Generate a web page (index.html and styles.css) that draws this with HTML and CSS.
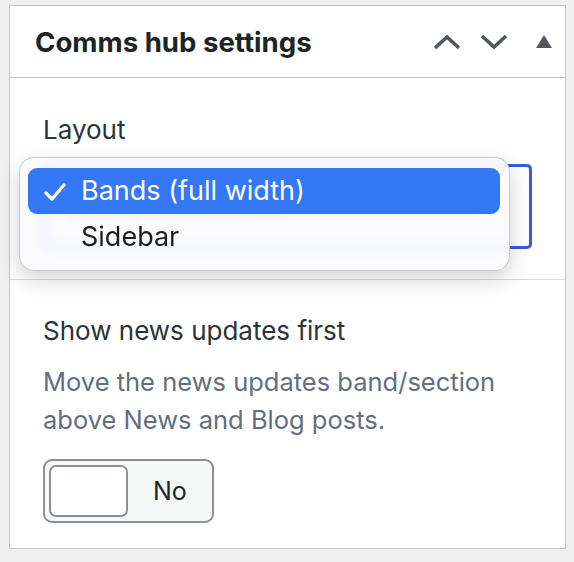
FILE: index.html
```html
<!DOCTYPE html>
<html lang="en">
<head>
  <meta charset="UTF-8">
  <title>Comms hub settings</title>
  <link rel="stylesheet" href="styles.css">
</head>
<body>

  <div class="postbox">
    <!-- Header -->
    <div class="postbox-header">
      <h2>Comms hub settings</h2>
      <div class="handle-actions">
        <button class="handle-btn" aria-label="Move up">
          <svg width="30" height="18" viewBox="0 0 30 18"><path d="M3 15 L15 4 L27 15" fill="none" stroke="#50575e" stroke-width="3.6"/></svg>
        </button>
        <button class="handle-btn" aria-label="Move down">
          <svg width="30" height="18" viewBox="0 0 30 18"><path d="M3 3 L15 14 L27 3" fill="none" stroke="#50575e" stroke-width="3.6"/></svg>
        </button>
        <button class="handle-btn toggle-arrow" aria-label="Toggle panel">
          <svg width="16" height="13" viewBox="0 0 16 13"><path d="M8 0 L16 13 L0 13 Z" fill="#50575e"/></svg>
        </button>
      </div>
    </div>

    <!-- Layout setting -->
    <div class="field">
      <label class="field-label">Layout</label>
      <div class="select-wrap">
        <div class="select">Bands (full width)</div>
        <!-- native dropdown menu (open) -->
        <div class="menu">
          <div class="menu-item selected">
            <svg class="check" width="22" height="18" viewBox="0 0 22 18"><path d="M2 10 L8 16 L20 2" fill="none" stroke="#fff" stroke-width="3.2" stroke-linecap="round" stroke-linejoin="round"/></svg>
            Bands (full width)
          </div>
          <div class="menu-item">Sidebar</div>
        </div>
      </div>
    </div>

    <!-- News first setting -->
    <div class="field last">
      <label class="field-label">Show news updates first</label>
      <p class="help">Move the news updates band/section above News and Blog posts.</p>
      <div class="switch">
        <span class="knob"></span>
        <span class="switch-text">No</span>
      </div>
    </div>
  </div>

</body>
</html>
```

FILE: styles.css
```css
body {
  margin: 0;
  padding: 5px 8px 0 9px;
  background: #f0f0f1;
  font-family: 'Inter', 'Liberation Sans', sans-serif;
  color: #1d2327;
}

.postbox {
  background: #fff;
  border: 1px solid #c3c4c7;
  height: 544px;
  box-sizing: border-box;
}

.postbox-header {
  display: flex;
  align-items: center;
  justify-content: space-between;
  height: 71px;
  padding: 0 13px 0 25px;
  border-bottom: 1px solid #c3c4c7;
}

.postbox-header h2 {
  margin: 0;
  font-size: 27.6px;
  font-weight: 700;
  color: #1d2327;
}

.handle-actions {
  display: flex;
  align-items: center;
  gap: 17px;
}

.handle-btn {
  background: none;
  border: none;
  padding: 0;
  display: flex;
  cursor: pointer;
}

.toggle-arrow {
  margin-left: 10px;
}

.field {
  padding: 36px 33px 30px;
  border-bottom: 1px solid #dcdcde;
}

.field.last {
  border-bottom: none;
  padding-top: 35px;
}

.field-label {
  display: block;
  font-size: 26px;
  line-height: 31px;
  color: #2c3338;
  margin-bottom: 19px;
}

.field.last .field-label {
  margin-bottom: 17px;
}

.select-wrap {
  position: relative;
}

.select {
  height: 79px;
  border: 3px solid #3858e9;
  border-radius: 5px;
  padding: 0 20px;
  font-size: 26px;
  line-height: 79px;
  color: #2c3338;
}

.menu {
  position: absolute;
  top: -7px;
  left: -24px;
  width: 491px;
  height: 114px;
  box-sizing: border-box;
  padding: 10px 9px 0 8px;
  border-radius: 15px;
  border: 1px solid rgba(0, 0, 0, 0.2);
  background: rgba(250, 250, 254, 0.86);
  backdrop-filter: blur(6px);
  box-shadow: 0 8px 22px rgba(0, 0, 0, 0.18);
}

.menu-item {
  height: 46px;
  line-height: 46px;
  padding-left: 53px;
  border-radius: 9px;
  font-size: 27px;
  color: #1d1d1f;
  position: relative;
}

.menu-item.selected {
  background: #3478f6;
  color: #fff;
}

.check {
  position: absolute;
  left: 16px;
  top: 15px;
}

.help {
  margin: 0 0 20px;
  font-size: 25.5px;
  line-height: 38px;
  color: #646e80;
}

.switch {
  display: inline-flex;
  align-items: center;
  border: 2px solid #8c8f94;
  border-radius: 9px;
  background: #f6f7f7;
  padding: 4px;
  padding-right: 25px;
}

.knob {
  width: 75px;
  height: 48px;
  background: #fff;
  border: 2px solid #8c8f94;
  border-radius: 7px;
}

.switch-text {
  margin-left: 25px;
  font-size: 25px;
  color: #1d2327;
}
```
